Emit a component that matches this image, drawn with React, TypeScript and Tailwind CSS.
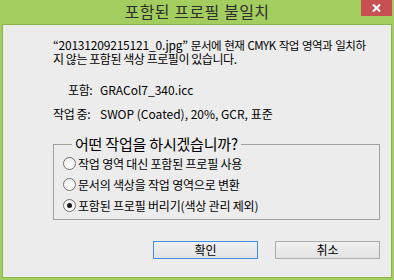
const font = { fontFamily: '"Noto Sans CJK KR", "Noto Sans", sans-serif' }

const Radio = ({ checked, label }: { checked?: boolean; label: string }) => {
  return (
    <label className="flex items-center h-[21px] pl-[9px]">
      <span className="w-[13px] h-[13px] rounded-full border border-[#6f6f6f] bg-gradient-to-b from-[#f0f0f0] to-[#ffffff] flex items-center justify-center">
        {checked && <span className="w-[5px] h-[5px] rounded-full bg-[#1a1a1a]" />}
      </span>
      <span className="ml-[2px] text-[12px] leading-[16px] tracking-[-0.2px] whitespace-nowrap">{label}</span>
    </label>
  )
}

const App = () => {
  return (
    <div className="w-[394px] h-[280px] bg-[#a3cd5f] flex flex-col text-black" style={font}>
      <div className="relative h-[24px] flex justify-center">
        <span className="text-[16px] leading-[22px] tracking-[0.5px] text-[#2e2e2e]">포함된 프로필 불일치</span>
        <button className="absolute right-[2px] top-0 w-[31px] h-[16px] bg-[#c75050] flex items-center justify-center">
          <svg width="9" height="8" viewBox="0 0 9 8">
            <path d="M1 0.5 L8 7.5 M8 0.5 L1 7.5" stroke="#ffffff" strokeWidth="2" />
          </svg>
        </button>
      </div>
      <div className="mx-[2px] mb-[2px] flex-1 border border-[#8db54c] bg-[#ececec] flex flex-col pl-[50px] pr-[11px]">
        <div className="mt-[13px] text-[12px] whitespace-nowrap">
          <div className="h-[14px] leading-[14px]">
            <span className="tracking-[-0.2px]">“20131209215121_0.jpg”</span>
            <span className="text-[11.5px] tracking-[-0.5px] [word-spacing:1px]"> 문서에 현재 CMYK 작업 영역과 일치하</span>
          </div>
          <div className="h-[14px] leading-[14px] tracking-[-0.45px]">지 않는 포함된 색상 프로필이 있습니다.</div>
        </div>
        <div className="mt-[16px] flex text-[12px] leading-[16px]">
          <span className="w-[47px] pl-[15px] tracking-[-0.4px]">포함:</span>
          <span>GRACol7_340.icc</span>
        </div>
        <div className="mt-[8px] flex text-[12px] leading-[16px]">
          <span className="w-[47px] tracking-[-0.4px]">작업 중:</span>
          <span>SWOP (Coated), 20%, GCR, 표준</span>
        </div>
        <fieldset className="mt-[13px] border border-[#a0a0a0] pb-[3px]">
          <legend className="ml-[18px] px-[3px] text-[15px] leading-[18px] tracking-[-0.2px]">어떤 작업을 하시겠습니까?</legend>
          <Radio label="작업 영역 대신 포함된 프로필 사용" />
          <Radio label="문서의 색상을 작업 영역으로 변환" />
          <Radio checked label="포함된 프로필 버리기(색상 관리 제외)" />
        </fieldset>
        <div className="mt-[21px] flex justify-end gap-[17px]">
          <button className="w-[105px] h-[18px] border border-[#3c8fe4] bg-gradient-to-b from-[#f0f0f0] to-[#e3e3e3] text-[12px] leading-[14px]">확인</button>
          <button className="w-[105px] h-[18px] border border-[#acacac] bg-gradient-to-b from-[#f0f0f0] to-[#e3e3e3] text-[12px] leading-[14px]">취소</button>
        </div>
      </div>
    </div>
  )
}

export default App
